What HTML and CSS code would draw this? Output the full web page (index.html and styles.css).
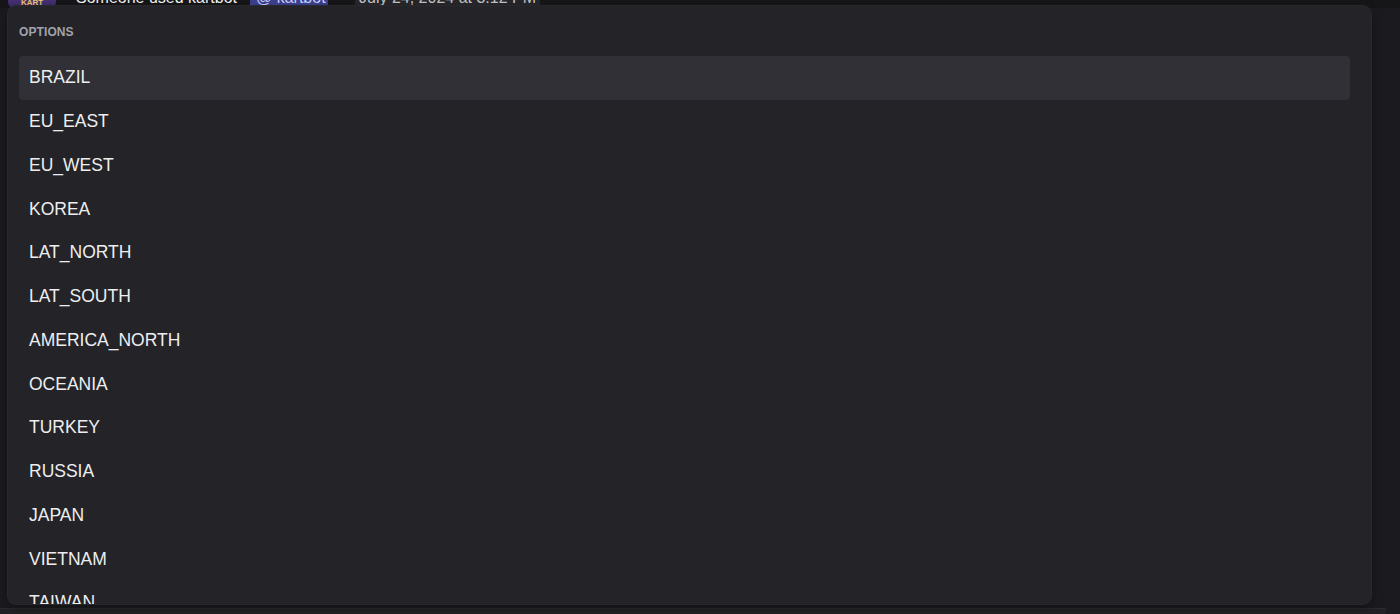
FILE: index.html
```html
<!DOCTYPE html>
<html lang="en">
<head>
<meta charset="utf-8">
<title>Options</title>
<link rel="stylesheet" href="styles.css">
</head>
<body>
<div class="chat">
  <div class="message">
    <div class="avatar"><span class="avatar-tag">KART</span></div>
    <div class="msg-head">
      <span class="author">Someone used kartbot</span>
      <span class="mention">@ kartbot</span>
      <span class="stamp">July 24, 2024 at 3:12 PM</span>
    </div>
  </div>
  <div class="composer"></div>
</div>

<div class="popout">
  <div class="popout-label">OPTIONS</div>
  <ul class="option-list">
    <li class="option is-active">BRAZIL</li>
    <li class="option">EU_EAST</li>
    <li class="option">EU_WEST</li>
    <li class="option">KOREA</li>
    <li class="option">LAT_NORTH</li>
    <li class="option">LAT_SOUTH</li>
    <li class="option">AMERICA_NORTH</li>
    <li class="option">OCEANIA</li>
    <li class="option">TURKEY</li>
    <li class="option">RUSSIA</li>
    <li class="option">JAPAN</li>
    <li class="option">VIETNAM</li>
    <li class="option">TAIWAN</li>
  </ul>
</div>
</body>
</html>
```

FILE: styles.css
```css
* { box-sizing: border-box; }

html, body {
  margin: 0;
  height: 100%;
  overflow: hidden;
}

body {
  background: #1b1b1f;
  font-family: "Liberation Sans", Arial, sans-serif;
  color: #f2f3f5;
  position: relative;
}

.chat {
  height: 100%;
  display: flex;
  flex-direction: column;
  justify-content: space-between;
}

/* message header sitting behind the popout */
.message {
  display: flex;
  align-items: flex-start;
  gap: 20px;
  padding-left: 8px;
  margin-top: -12px;
  background: #161619;
  height: 20px;
}

.avatar {
  width: 48px;
  height: 20px;
  border-radius: 0 0 6px 6px;
  background: linear-gradient(180deg, #5a3a8a 0%, #3a2a66 100%);
  display: flex;
  justify-content: center;
  align-items: flex-end;
}

.avatar-tag {
  font-size: 8px;
  font-weight: 700;
  color: #f0c66a;
  line-height: 10px;
}

.msg-head {
  display: flex;
  align-items: center;
  font-size: 16px;
  line-height: 20px;
  height: 20px;
  white-space: nowrap;
}

.author {
  color: #f2f3f5;
  width: 174px;
  overflow: hidden;
}

.mention {
  background: #3c3f8f;
  color: #c9cdfb;
  padding: 0 6px;
  border-radius: 3px;
  width: 78px;
  overflow: hidden;
}

.stamp {
  margin-left: 27px;
  background: #26262b;
  color: #c4c5ca;
  padding: 0 4px;
}

.composer {
  height: 6px;
  margin: 0 14px 0 0;
  background: #222226;
  border-top: 1px solid #2a2a2f;
}

/* autocomplete popout */
.popout {
  position: absolute;
  left: 8px;
  top: 6px;
  width: 1363px;
  height: 598px;
  background: #232328;
  border-radius: 8px;
  box-shadow: 0 0 0 1px #28282d, 0 4px 12px rgba(0, 0, 0, 0.35);
  padding: 0 21px 0 11px;
  overflow: hidden;
}

.popout-label {
  height: 50px;
  padding-top: 19px;
  font-size: 12px;
  font-weight: 700;
  line-height: 15px;
  color: #a2a3ab;
  letter-spacing: 0.1px;
}

.option-list {
  list-style: none;
  margin: 0;
  padding: 0;
}

.option {
  height: 43.75px;
  display: flex;
  align-items: center;
  padding-left: 10px;
  font-size: 17.5px;
  color: #eeeef0;
  border-radius: 4px;
}

.option.is-active {
  background: #303036;
}
```
